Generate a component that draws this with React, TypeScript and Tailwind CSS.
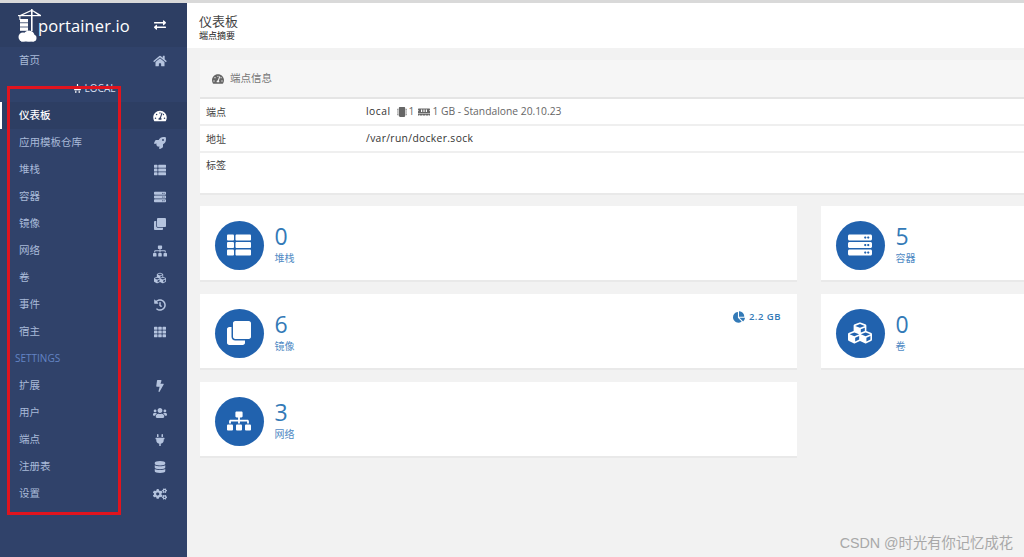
import React from "react";
import {
  FaBolt, FaChartPie, FaClone, FaCogs, FaCubes, FaDatabase, FaExchangeAlt, FaHistory, FaHome,
  FaMemory, FaMicrochip, FaPlug, FaRocket, FaServer, FaSitemap, FaTachometerAlt, FaTh, FaThList, FaUsers,
} from "react-icons/fa";

const font = { fontFamily: '"Open Sans", "Noto Sans CJK SC", sans-serif' };

const topNav = [
  { name: "仪表板", icon: FaTachometerAlt, active: true },
  { name: "应用模板仓库", icon: FaRocket },
  { name: "堆栈", icon: FaThList },
  { name: "容器", icon: FaServer },
  { name: "镜像", icon: FaClone },
  { name: "网络", icon: FaSitemap },
  { name: "卷", icon: FaCubes },
  { name: "事件", icon: FaHistory },
  { name: "宿主", icon: FaTh },
];

const settingsNav = [
  { name: "扩展", icon: FaBolt },
  { name: "用户", icon: FaUsers },
  { name: "端点", icon: FaPlug },
  { name: "注册表", icon: FaDatabase },
  { name: "设置", icon: FaCogs },
];

function NavRow({ name, icon: Icon, active }: { name: string; icon: React.ComponentType<{ className?: string }>; active?: boolean }) {
  return (
    <div className={"flex h-[27px] items-center justify-between pl-[19px] pr-[20px] text-[10.5px] " + (active ? "border-l-2 border-white bg-[#2d3e63] !pl-[17px] font-medium text-white" : "text-[#a9bad9]")}>
      <span>{name}</span>
      <Icon className={"h-3 w-3.5 " + (active ? "text-white" : "text-[#b4c3de]")} />
    </div>
  );
}

function Logo() {
  return (
    <svg viewBox="0 0 23 33" className="h-[33px] w-[23px] shrink-0" fill="white">
      <rect x="0" y="6" width="23" height="1.2" />
      <path d="M13 0h1.6v22H13zM2 6l11-5v1.2L5 6zM23 6l-8.4-5v1.2L20 6z" />
      <rect x="2" y="10" width="8" height="3.4" />
      <rect x="2" y="14.2" width="8" height="3.4" />
      <rect x="2" y="18.4" width="8" height="3.4" />
      <rect x="1.4" y="6" width="1" height="5" />
      <circle cx="5" cy="28" r="4.5" />
      <circle cx="11" cy="27" r="5.5" />
      <circle cx="15" cy="29" r="3.5" />
      <rect x="3" y="27" width="13" height="5.5" />
    </svg>
  );
}

function StatCard({ value, label, icon: Icon, extra }: { value: string; label: string; icon: React.ComponentType<{ className?: string }>; extra?: React.ReactNode }) {
  return (
    <div className="relative flex h-[76px] items-center border-b-2 border-[#e9e9e9] bg-white pl-[14.5px] pt-[1px]">
      <div className="mt-[3px] flex h-[49px] w-[49px] items-center justify-center rounded-full bg-[#2162ae] text-white">
        <Icon className="h-[24px] w-[24px]" />
      </div>
      <div className="ml-[11px] flex flex-col text-[#337ab7]">
        <span className="text-[23px] font-medium leading-[26px]">{value}</span>
        <span className="mt-[3px] text-[10px] leading-3 text-[#4f8ac4]">{label}</span>
      </div>
      {extra}
    </div>
  );
}

function InfoRow({ label, children, tall }: { label: string; children?: React.ReactNode; tall?: boolean }) {
  return (
    <div className={"flex border-b-2 border-[#efefef] pl-[6px] text-[10.3px] text-[#444] last:border-b-0 " + (tall ? "h-[41px] pt-[5px]" : "h-[27px] items-center pt-[1px]")}>
      <span className="w-[160px] shrink-0 text-[10px]">{label}</span>
      {children}
    </div>
  );
}

export default function App() {
  return (
    <div className="relative flex h-[557px] w-[1024px] flex-col overflow-hidden bg-[#f2f2f2]" style={font}>
      <div className="h-[3px] shrink-0 bg-[#d9d9d9]" />
      <div className="flex min-h-0 flex-1">
        <aside className="w-[187px] shrink-0 bg-[#30426a]">
          <div className="flex h-[44px] items-center justify-between bg-[#2d3e63] pl-[18px] pr-[20px] text-white">
            <div className="flex items-center">
              <Logo />
              <span className="-ml-[3px] mt-[3px] text-[16.5px] tracking-[0.1px]">portainer.io</span>
            </div>
            <FaExchangeAlt className="h-3 w-3.5" />
          </div>
          <NavRow name="首页" icon={FaHome} />
          <div className="flex h-[28px] items-center justify-center pl-[1px] text-[10px] text-[#d5dded]">
            <FaPlug className="mr-[3px] h-[9px] w-[9px] rotate-180 text-white" />
            <span>LOCAL</span>
          </div>
          {topNav.map((item) => (
            <NavRow key={item.name} {...item} />
          ))}
          <div className="flex h-[27px] items-center pl-[15px] text-[10px] text-[#6384c4]">SETTINGS</div>
          {settingsNav.map((item) => (
            <NavRow key={item.name} {...item} />
          ))}
        </aside>

        <main className="w-[1240px] shrink-0">
          <header className="h-[45px] bg-white pl-[12px] pt-[9px]">
            <div className="text-[13px] leading-[18px] text-[#444]">仪表板</div>
            <div className="text-[9px] leading-[12px] text-[#222]">端点摘要</div>
          </header>

          <div className="flex flex-col pl-[13px] pr-[16px] pt-[12px]">
            <section className="h-[135px] w-[1210px] border-b-2 border-[#e9e9e9] bg-white">
              <div className="flex h-[39px] items-center gap-[6px] border-b-2 border-[#e5e5e5] bg-[#f6f6f6] pl-[12px] pt-[1px] text-[10.5px] text-[#777]">
                <FaTachometerAlt className="h-3 w-3 text-[#666]" />
                <span>端点信息</span>
              </div>
              <InfoRow label="端点">
                <span className="flex items-center text-[#666]">
                  <span className="tracking-[0.5px] text-[#333]">local</span>
                  <FaMicrochip className="ml-[6px] h-[10px] w-[10px] text-[#666]" />
                  <span className="ml-[2px]">1</span>
                  <FaMemory className="ml-[4px] h-[10px] w-3 text-[#666]" />
                  <span className="ml-[2px]">1 GB - Standalone 20.10.23</span>
                </span>
              </InfoRow>
              <InfoRow label="地址">
                <span className="tracking-[0.35px] text-[#333]">/var/run/docker.sock</span>
              </InfoRow>
              <InfoRow label="标签" tall />
            </section>

            <div className="mt-[11px] grid w-[1222px] grid-cols-[597px_597px] gap-x-[24px] gap-y-[12px]">
              <StatCard value="0" label="堆栈" icon={FaThList} />
              <StatCard value="5" label="容器" icon={FaServer} />
              <StatCard
                value="6"
                label="镜像"
                icon={FaClone}
                extra={
                  <span className="absolute right-[16px] top-[16px] flex items-center gap-[4px] text-[9.5px] font-semibold tracking-[0.5px] text-[#337ab7]">
                    <FaChartPie className="h-3 w-3" />
                    2.2 GB
                  </span>
                }
              />
              <StatCard value="0" label="卷" icon={FaCubes} />
              <StatCard value="3" label="网络" icon={FaSitemap} />
            </div>
          </div>
        </main>
      </div>

      {/* annotation drawn over the screenshot */}
      <div className="absolute left-[7px] top-[86px] h-[429px] w-[114px] border-[3px] border-[#e0141e]" />
      <div className="absolute right-[11px] top-[533px] text-[14.3px] leading-5 text-[#a8a8a8]" style={{ fontFamily: '"Liberation Sans", "Noto Sans CJK SC", sans-serif' }}>
        CSDN @时光有你记忆成花
      </div>
    </div>
  );
}
